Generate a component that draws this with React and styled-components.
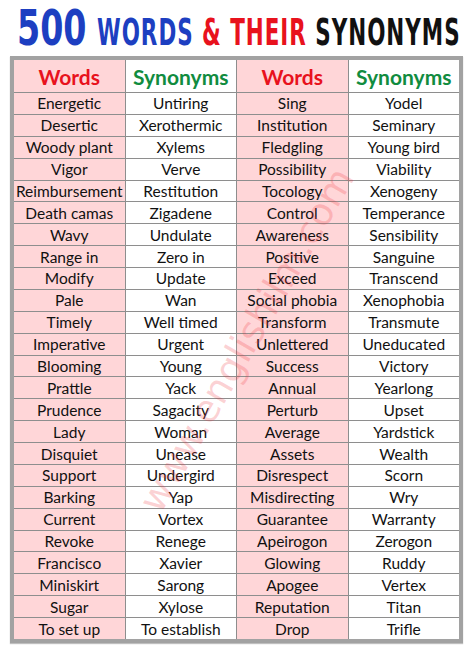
import React from 'react';
import styled, { createGlobalStyle } from 'styled-components';

const GlobalStyle = createGlobalStyle`
  html, body { margin: 0; padding: 0; background: #ffffff; }
  body { font-family: Lato, "Open Sans", sans-serif; }
`;

const Page = styled.div`
  width: 474px;
  height: 651px;
  padding: 6px 10px 0 10px;
  box-sizing: border-box;
  display: flex;
  flex-direction: column;
  gap: 5px;
  overflow: hidden;
`;

const Title = styled.h1`
  margin: 0;
  height: 45px;
  display: flex;
  align-items: baseline;
  padding-left: 7px;
  font-family: "DejaVu Sans Condensed", "DejaVu Sans", sans-serif;
  font-weight: bold;
  white-space: nowrap;
  line-height: 45px;
`;

const Big = styled.span`
  display: inline-block;
  font-size: 50px;
  color: #1d3fc1;
  transform: scaleX(0.74);
  transform-origin: left bottom;
  width: 80px;
  flex: none;
`;

const Rest = styled.span`
  display: inline-block;
  font-size: 37px;
  letter-spacing: 1.5px;
  transform: scaleX(0.645);
  transform-origin: left bottom;
  width: 360px;
  flex: none;
`;

const Part = styled.span`
  color: ${p => p.$color};
`;

const Frame = styled.div`
  position: relative;
  border: 4px solid #a2a2a2;
  box-shadow: 0 1px 1px rgba(0,0,0,0.25);
  width: 445px;
  height: 579px;
`;

const Grid = styled.div`
  display: grid;
  grid-template-columns: repeat(4, 1fr);
  grid-template-rows: 32px repeat(25, 1fr);
  gap: 1px;
  background: #8e8e8e;
  width: 100%;
  height: 100%;
`;

const Cell = styled.div`
  background: ${p => (p.$pink ? '#ffd6d8' : '#ffffff')};
  display: flex;
  align-items: center;
  justify-content: center;
  font-size: 15.5px;
  color: #111111;
  white-space: nowrap;
  overflow: hidden;
`;

const HeadCell = styled(Cell)`
  font-size: 21px;
  font-weight: bold;
  color: ${p => (p.$pink ? '#e8121d' : '#118c3f')};
`;

const Watermark = styled.div`
  position: absolute;
  left: 40px;
  top: 262px;
  width: 380px;
  transform: rotate(-60deg);
  font-family: "DejaVu Sans", sans-serif;
  font-size: 38px;
  color: rgba(240, 50, 60, 0.22);
  text-align: center;
  pointer-events: none;
  white-space: nowrap;
`;

const rows = [
  ['Energetic', 'Untiring', 'Sing', 'Yodel'],
  ['Desertic', 'Xerothermic', 'Institution', 'Seminary'],
  ['Woody plant', 'Xylems', 'Fledgling', 'Young bird'],
  ['Vigor', 'Verve', 'Possibility', 'Viability'],
  ['Reimbursement', 'Restitution', 'Tocology', 'Xenogeny'],
  ['Death camas', 'Zigadene', 'Control', 'Temperance'],
  ['Wavy', 'Undulate', 'Awareness', 'Sensibility'],
  ['Range in', 'Zero in', 'Positive', 'Sanguine'],
  ['Modify', 'Update', 'Exceed', 'Transcend'],
  ['Pale', 'Wan', 'Social phobia', 'Xenophobia'],
  ['Timely', 'Well timed', 'Transform', 'Transmute'],
  ['Imperative', 'Urgent', 'Unlettered', 'Uneducated'],
  ['Blooming', 'Young', 'Success', 'Victory'],
  ['Prattle', 'Yack', 'Annual', 'Yearlong'],
  ['Prudence', 'Sagacity', 'Perturb', 'Upset'],
  ['Lady', 'Woman', 'Average', 'Yardstick'],
  ['Disquiet', 'Unease', 'Assets', 'Wealth'],
  ['Support', 'Undergird', 'Disrespect', 'Scorn'],
  ['Barking', 'Yap', 'Misdirecting', 'Wry'],
  ['Current', 'Vortex', 'Guarantee', 'Warranty'],
  ['Revoke', 'Renege', 'Apeirogon', 'Zerogon'],
  ['Francisco', 'Xavier', 'Glowing', 'Ruddy'],
  ['Miniskirt', 'Sarong', 'Apogee', 'Vertex'],
  ['Sugar', 'Xylose', 'Reputation', 'Titan'],
  ['To set up', 'To establish', 'Drop', 'Trifle'],
];

const heads = ['Words', 'Synonyms', 'Words', 'Synonyms'];

export default function App() {
  return (
    <>
      <GlobalStyle />
      <Page>
        <Title>
          <Big>500</Big>
          <Rest>
            <Part $color="#1d3fc1">WORDS </Part>
            <Part $color="#e8121d">&amp; THEIR </Part>
            <Part $color="#111111">SYNONYMS</Part>
          </Rest>
        </Title>
        <Frame>
          <Grid>
            {heads.map((h, i) => (
              <HeadCell key={'h' + i} $pink={i % 2 === 0}>{h}</HeadCell>
            ))}
            {rows.map((r, ri) =>
              r.map((t, ci) => (
                <Cell key={ri + '-' + ci} $pink={ci % 2 === 0}>{t}</Cell>
              ))
            )}
          </Grid>
          <Watermark>www.englishilm.com</Watermark>
        </Frame>
      </Page>
    </>
  );
}
